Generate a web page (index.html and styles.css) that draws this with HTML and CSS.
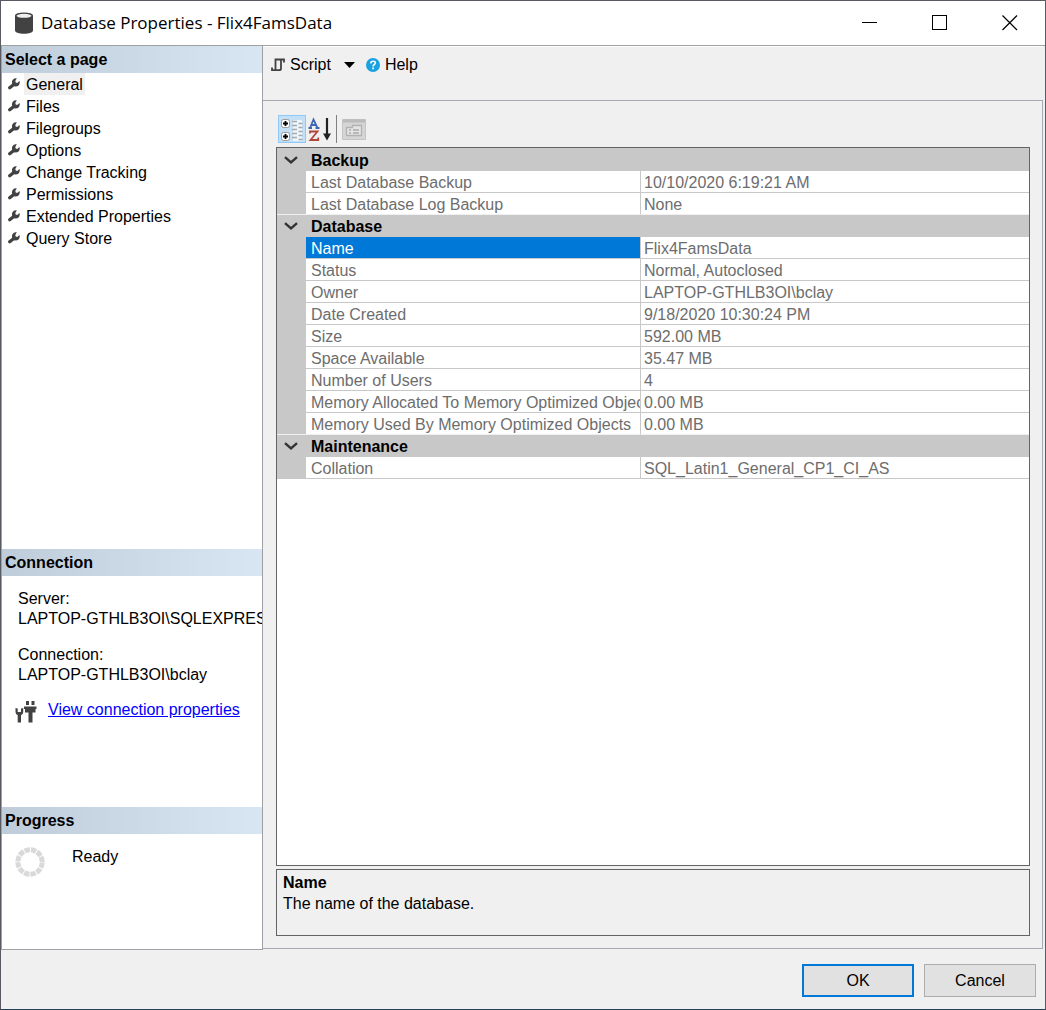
FILE: index.html
```html
<!DOCTYPE html>
<html lang="en">
<head>
<meta charset="utf-8">
<title>Database Properties - Flix4FamsData</title>
<link rel="stylesheet" href="styles.css">
</head>
<body>
<svg width="0" height="0" class="symbols" aria-hidden="true">
  <symbol id="wrench" viewBox="0 0 12 12"><path d="M1.700 9.800 5.500 6.800" stroke="#424242" stroke-width="3.300" stroke-linecap="round"/><path d="M8.800.3A3.900 3.900 0 0 0 4 4.500q0 3.700 3.600 4Q11.400 8.500 11.800 4.200L11.400 3 9.200 4.900 7.700 4.400 7.300 3z" fill="#424242"/></symbol>
  <symbol id="chevron" viewBox="0 0 14 8"><path d="M1 1.2 7 6.4 13 1.2" fill="none" stroke="#333" stroke-width="2.4"/></symbol>
</svg>
<div class="window">
  <header class="titlebar">
    <svg class="app-icon" width="20" height="22" viewBox="0 0 20 22"><path d="M1 3.5V18.5C1 20.5 5 21.7 10 21.7s9-1.200 9-3.200V3.500z" fill="#424242"/><ellipse cx="10" cy="3.600" rx="9" ry="3.200" fill="#424242"/><ellipse cx="10" cy="3.800" rx="7.500" ry="2" fill="#f0f0f0"/></svg>
    <h1>Database Properties - Flix4FamsData</h1>
    <div class="caption-buttons">
      <button type="button" aria-label="Minimize"><svg width="16" height="16"><path d="M0 7.500H15" stroke="#000"/></svg></button>
      <button type="button" aria-label="Maximize"><svg width="16" height="16"><rect x=".5" y=".5" width="14" height="14" fill="none" stroke="#000"/></svg></button>
      <button type="button" aria-label="Close"><svg width="16" height="16"><path d="M.5.5l14.500 14.500M15 .5.5 15" stroke="#000" stroke-width="1.200"/></svg></button>
    </div>
  </header>
  <div class="content">
    <aside class="sidebar">
      <nav class="pages">
        <h2>Select a page</h2>
        <ul>
          <li><a href="#general" class="current"><svg><use href="#wrench"/></svg><span>General</span></a></li>
          <li><a href="#files"><svg><use href="#wrench"/></svg><span>Files</span></a></li>
          <li><a href="#filegroups"><svg><use href="#wrench"/></svg><span>Filegroups</span></a></li>
          <li><a href="#options"><svg><use href="#wrench"/></svg><span>Options</span></a></li>
          <li><a href="#tracking"><svg><use href="#wrench"/></svg><span>Change Tracking</span></a></li>
          <li><a href="#permissions"><svg><use href="#wrench"/></svg><span>Permissions</span></a></li>
          <li><a href="#extended"><svg><use href="#wrench"/></svg><span>Extended Properties</span></a></li>
          <li><a href="#querystore"><svg><use href="#wrench"/></svg><span>Query Store</span></a></li>
        </ul>
      </nav>
      <section class="connection">
        <h2>Connection</h2>
        <dl>
          <dt>Server:</dt><dd>LAPTOP-GTHLB3OI\SQLEXPRESS</dd>
          <dt>Connection:</dt><dd>LAPTOP-GTHLB3OI\bclay</dd>
        </dl>
        <div class="view-link">
          <svg width="22" height="23" viewBox="0 0 22 23" fill="#424242"><path d="M.5 8v4q0 2.200 2.200 3.200V22.500h3.300V15.200Q8.200 14.200 8.200 12V8L6 8.600V12H2.700V8.600z"/><path d="M11 1h3v4h-3zM16.500 1h3v4h-3zM9 6.500h12.500V9H20.500v3.500h-3V22.500h-4V12.500H10V9H9z"/></svg>
          <a href="#connection">View connection properties</a>
        </div>
      </section>
      <section class="progress">
        <h2>Progress</h2>
        <div class="status">
          <svg width="30" height="30"><circle cx="15" cy="15" r="12.200" fill="none" stroke="#d9d9d9" stroke-width="5" stroke-dasharray="5.400 .988" stroke-dashoffset="-.5"/></svg>
          <span>Ready</span>
        </div>
      </section>
    </aside>
    <main>
      <div class="toolbar">
        <button type="button"><svg width="14" height="14" viewBox="0 0 14 14" fill="none" stroke="#424242" stroke-width="1.800"><path d="M13 4.500V1.500H4.500V12.200H1V9.500M4 1.500h6V10.500q0 1.700-2 1.700H1.500"/></svg>Script</button>
        <button type="button" class="drop" aria-label="Script options"><svg width="11" height="6"><path d="M0 0h11L5.500 6z"/></svg></button>
        <button type="button"><svg width="14" height="14"><circle cx="7" cy="7" r="7" fill="#1ba1e2"/><path d="M4.800 5.400q0-2.200 2.300-2.200t2.200 1.900q0 1-1.200 1.700-1 .6-1 1.600" fill="none" stroke="#fff" stroke-width="1.600"/><path d="M6.200 9.500h1.800v1.700H6.200z" fill="#fff"/></svg>Help</button>
      </div>
      <div class="page">
        <div class="grid-tools">
          <button type="button" class="pressed" aria-label="Categorized"><svg width="28" height="28" viewBox="0 0 28 28"><g fill="#fff" stroke="#9a9a9a"><rect x="3.500" y="4.500" width="8" height="8" rx="2"/><rect x="3.500" y="17.500" width="8" height="8" rx="2"/></g><path d="M7.500 6v5M5 8.500h5M7.500 19v5M5 21.500h5" stroke="#000" stroke-width="1.800"/><path d="M15 5h9v21h-9z" fill="#fff" opacity=".7"/><path d="M14 6.500h5M14 10.500h5M14 14.500h5M14 18.500h5M14 22.500h5M20.500 8.500h4M20.500 12.500h4M20.500 16.500h4M20.500 20.500h4M20.500 24.500h4" stroke="#a8a8a8" stroke-width="1.400"/></svg></button>
          <button type="button" aria-label="Alphabetical"><svg width="26" height="28" viewBox="0 0 26 28" fill="none"><path d="M4 13 7.500 4.500l4 8.500M5.500 10h5M2.500 13h3.500M9.500 13h4" stroke="#4267b2" stroke-width="1.800"/><path d="M4 18.500V16.500h7.500L4.500 25h7.700v-2.500" stroke="#b0473c" stroke-width="1.800"/><path d="M21 3v18" stroke="#222" stroke-width="2.200"/><path d="M17 18.500h8L21 25.500z" fill="#222"/></svg></button>
          <i class="divider"></i>
          <button type="button" disabled aria-label="Property Pages"><svg width="28" height="28" viewBox="0 0 28 28" fill="none"><path d="M2.500 4.500h23v20h-23z" fill="#d5d5d5" stroke="#c4c4c4"/><path d="M3 6h22" stroke="#bbb" stroke-width="3"/><path d="M6.500 12.500h6v-2h9v10h-15z" fill="#e4e4e4" stroke="#b2b2b2" stroke-width="1.300"/><path d="M9 15h2M13 15h6M9 18h2M13 18h6" stroke="#aaa" stroke-width="1.300"/></svg></button>
        </div>
        <div class="grid">
          <table>
            <colgroup><col class="c-gutter"><col class="c-name"><col></colgroup>
            <tbody>
              <tr class="cat"><td><button type="button" aria-label="Collapse Backup"><svg><use href="#chevron"/></svg></button></td><th colspan="2">Backup</th></tr>
              <tr><td></td><th>Last Database Backup</th><td>10/10/2020 6:19:21 AM</td></tr>
              <tr><td></td><th>Last Database Log Backup</th><td>None</td></tr>
            </tbody>
            <tbody>
              <tr class="cat"><td><button type="button" aria-label="Collapse Database"><svg><use href="#chevron"/></svg></button></td><th colspan="2">Database</th></tr>
              <tr class="selected"><td></td><th>Name</th><td>Flix4FamsData</td></tr>
              <tr><td></td><th>Status</th><td>Normal, Autoclosed</td></tr>
              <tr><td></td><th>Owner</th><td>LAPTOP-GTHLB3OI\bclay</td></tr>
              <tr><td></td><th>Date Created</th><td>9/18/2020 10:30:24 PM</td></tr>
              <tr><td></td><th>Size</th><td>592.00 MB</td></tr>
              <tr><td></td><th>Space Available</th><td>35.47 MB</td></tr>
              <tr><td></td><th>Number of Users</th><td>4</td></tr>
              <tr><td></td><th>Memory Allocated To Memory Optimized Objects</th><td>0.00 MB</td></tr>
              <tr><td></td><th>Memory Used By Memory Optimized Objects</th><td>0.00 MB</td></tr>
            </tbody>
            <tbody>
              <tr class="cat"><td><button type="button" aria-label="Collapse Maintenance"><svg><use href="#chevron"/></svg></button></td><th colspan="2">Maintenance</th></tr>
              <tr><td></td><th>Collation</th><td>SQL_Latin1_General_CP1_CI_AS</td></tr>
            </tbody>
          </table>
        </div>
        <div class="help-pane">
          <h3>Name</h3>
          <p>The name of the database.</p>
        </div>
      </div>
    </main>
  </div>
  <footer>
    <button type="button" class="default">OK</button>
    <button type="button">Cancel</button>
  </footer>
</div>
</body>
</html>
```
FILE: styles.css
```css
* { box-sizing: border-box; }
body {
  margin: 0;
  font: 16px/20px "Liberation Sans", Arial, sans-serif;
  color: #000;
}
h1, h2, h3, p, ul, dl, dd { margin: 0; padding: 0; }
button { font: inherit; color: inherit; background: none; border: 0; padding: 0; }
svg { display: block; flex: none; }
.symbols { position: absolute; }

.window {
  min-height: 100vh;
  display: flex;
  flex-direction: column;
  background: #f0f0f0;
  border: 1px solid #5a5a62;
  border-bottom-color: #1f4257;
}
.titlebar {
  display: flex;
  align-items: center;
  height: 45px;
  padding-left: 13px;
  background: #fff;
  border-bottom: 1px solid #a0a0a0;
}
.titlebar h1 {
  flex: 1;
  margin-left: 7px;
  font: 17px/24px "Open Sans", "Noto Sans", sans-serif;
}
.caption-buttons { display: flex; }
.caption-buttons button {
  width: 70px;
  height: 44px;
  display: flex;
  align-items: center;
  justify-content: center;
}

.content { flex: 1; display: flex; }
.sidebar {
  width: 262px;
  flex: none;
  display: flex;
  flex-direction: column;
  background: #fff;
  border: 1px solid #a0a0a8;
  border-top: 0;
}
.sidebar h2 {
  height: 27px;
  padding-left: 3px;
  font-size: 16px;
  line-height: 27px;
  background: linear-gradient(90deg, #bfcddb, #d8e6f3);
}
.pages { flex: 1; }
.pages ul { list-style: none; }
.pages a {
  display: flex;
  align-items: center;
  gap: 4px;
  padding-left: 6px;
  color: #000;
  text-decoration: none;
}
.pages a svg { width: 12px; height: 12px; }
.pages a span { padding: 2px 2px 0; line-height: 20px; }
.pages .current span { background: #f0f0f0; }

.connection { height: 258px; }
.connection dl { padding: 13px 0 0 16px; overflow: hidden; white-space: nowrap; }
.connection dd { margin-bottom: 16px; }
.connection dd:last-child { margin-bottom: 15px; }
.view-link { display: flex; gap: 11px; padding-left: 13px; }
.view-link a { color: #00f; }
.progress { height: 142px; }
.status { display: flex; gap: 27px; padding: 13px; }

main { flex: 1; min-width: 0; display: flex; flex-direction: column; padding: 0 2px 1px 0; }
.toolbar {
  display: flex;
  align-items: flex-start;
  height: 54px;
  padding: 8px 8px 0;
  border-top: 1px solid #fff;
}
.toolbar button { display: flex; align-items: center; gap: 5px; }
.toolbar .drop { height: 20px; padding: 0 11px 0 13px; }
.page {
  flex: 1;
  display: flex;
  flex-direction: column;
  padding: 14px 12px 12px 13px;
  border: 1px solid #a8a8b2;
  border-left: 0;
}
.grid-tools { display: flex; align-items: center; height: 32px; padding: 0 2px 4px; }
.grid-tools .pressed { background: #c4e0f6; box-shadow: inset 0 0 0 1px #90c8f6; }
.grid-tools .divider { width: 1px; height: 28px; margin: 0 3px 0 4px; background: #808080; }

.grid { flex: 1; background: #fff; border: 1px solid #646464; }
table {
  width: 100%;
  table-layout: fixed;
  border-collapse: separate;
  border-spacing: 0;
  border-top: 1px solid #c8c8c8;
}
.c-gutter { width: 29px; }
.c-name { width: 335px; }
tr { height: 22px; }
th, td {
  padding: 3px 0 0 3px;
  line-height: 18px;
  font-weight: 400;
  text-align: left;
  color: #6d6d6d;
  white-space: nowrap;
  overflow: hidden;
  border-bottom: 1px solid #c8c8c8;
}
th { padding-left: 5px; border-right: 1px solid #c8c8c8; }
td:first-child { padding: 0; background: #c8c8c8; }
.cat th { font-weight: 700; color: #000; background: #c8c8c8; }
.cat button { display: block; margin-left: 7px; }
.cat svg { width: 14px; height: 8px; }
.selected th { color: #fff; background: #0078d7; }
tbody:not(:last-child) tr:last-child > * { border-bottom-color: #f0f0f0; }

.help-pane {
  height: 67px;
  margin-top: 3px;
  padding: 3px 6px;
  border: 1px solid #646464;
}
.help-pane h3 { font-size: 16px; line-height: 20px; }
.help-pane p { line-height: 22px; }

footer {
  display: flex;
  justify-content: flex-end;
  gap: 10px;
  padding: 14px 9px 12px;
}
footer button {
  width: 112px;
  height: 33px;
  background: #e1e1e1;
  border: 1px solid #adadad;
}
footer .default { border: 2px solid #0078d7; }
```
